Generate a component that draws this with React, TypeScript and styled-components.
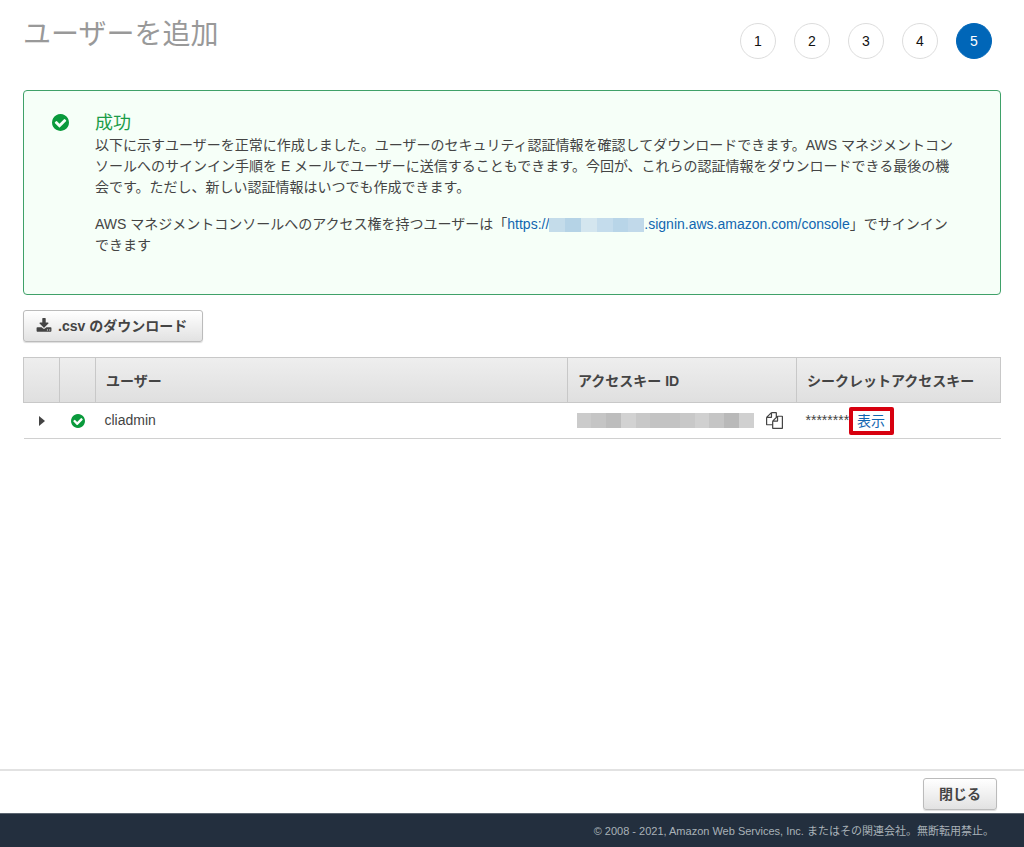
import React from "react";
import styled, { createGlobalStyle } from "styled-components";

const GlobalStyle = createGlobalStyle`
  *, *::before, *::after { box-sizing: border-box; }
  body {
    margin: 0;
    background: #fff;
    color: #444;
    font-family: "Liberation Sans", "Noto Sans CJK JP", sans-serif;
    font-size: 14px;
    line-height: 21px;
  }
  button { font-family: inherit; cursor: pointer; }
`;

const Page = styled.div`
  display: flex;
  flex-direction: column;
  min-height: 100vh;
`;

const Main = styled.main`
  flex: 1;
  padding: 12px 23px 0;
`;

const Header = styled.header`
  display: flex;
  justify-content: space-between;
  align-items: flex-start;
  height: 78px;
`;

const Title = styled.h1`
  margin: 0;
  font-size: 28px;
  font-weight: 400;
  line-height: 46px;
  color: #999;
`;

const Steps = styled.ol`
  display: flex;
  gap: 18px;
  margin: 0;
  padding: 11px 9px 0 0;
  list-style: none;
`;

const Step = styled.li<{ $current?: boolean }>`
  display: flex;
  align-items: center;
  justify-content: center;
  width: 36px;
  height: 36px;
  border: 1px solid ${(p) => (p.$current ? "#0066b8" : "#ddd")};
  border-radius: 50%;
  background: ${(p) => (p.$current ? "#0066b8" : "#fff")};
  color: ${(p) => (p.$current ? "#fff" : "#111")};
`;

const Notice = styled.section`
  display: flex;
  min-height: 205px;
  padding: 20px 42px 20px 28px;
  border: 1px solid #3fa169;
  border-radius: 4px;
  background: #f6fff8;
`;

const NoticeIcon = styled.div`
  flex: none;
  width: 43px;
  padding-top: 3px;
`;

const NoticeBody = styled.div`
  flex: 1;
  min-width: 0;
`;

const NoticeTitle = styled.h2`
  margin: 0;
  font-size: 18px;
  font-weight: 400;
  line-height: 24px;
  color: #1b9c48;
`;

const Paragraph = styled.p`
  margin: 0 0 16px;
`;

const Phrase = styled.span`
  white-space: nowrap;
`;

const Link = styled.a`
  color: #1166b0;
  text-decoration: none;
`;

const Mosaic = styled.span<{ $width: number; $height: number }>`
  display: inline-flex;
  width: ${(p) => p.$width}px;
  height: ${(p) => p.$height}px;
  vertical-align: middle;
`;

const MosaicCell = styled.span<{ $color: string }>`
  flex: 1;
  background: ${(p) => p.$color};
`;

const Button = styled.button<{ $withIcon?: boolean }>`
  display: inline-flex;
  align-items: center;
  justify-content: center;
  gap: 6px;
  height: 32px;
  padding: 0 15px 0 ${(p) => (p.$withIcon ? 12 : 15)}px;
  border: 1px solid #bbb;
  border-radius: 3px;
  background: linear-gradient(#fff, #e2e2e2);
  box-shadow: 0 1px 1px #ddd;
  color: #444;
  font-size: 14px;
  font-weight: 700;
  line-height: 20px;
`;

const Toolbar = styled.div`
  display: flex;
  padding: 15px 0;
`;

const Table = styled.table`
  width: 100%;
  border-collapse: collapse;
  table-layout: fixed;
`;

const Column = styled.col<{ $width?: number }>`
  ${(p) => (p.$width ? `width: ${p.$width}px;` : "")}
`;

const HeadRow = styled.tr`
  height: 45px;
  background: linear-gradient(#eee, #dfdfdf);
`;

const HeadCell = styled.th`
  padding: 2px 10px 0;
  border: 1px solid #c8c8c8;
  text-align: left;
  font-weight: 700;
`;

const Row = styled.tr`
  height: 36px;
  border-bottom: 1px solid #d0d0d0;
`;

const Cell = styled.td`
  padding: 0 9px;
`;

const CellContent = styled.div<{ $center?: boolean; $gap?: number }>`
  display: flex;
  align-items: center;
  justify-content: ${(p) => (p.$center ? "center" : "flex-start")};
  gap: ${(p) => p.$gap ?? 0}px;
  height: 28px;
`;

const IconButton = styled.button`
  display: flex;
  align-items: center;
  padding: 0;
  border: 0;
  background: none;
  color: #444;
`;

const ShowLink = styled.a`
  padding: 0 5px 0 4px;
  border: 4px solid #d7000f;
  border-radius: 2px;
  background: #fff;
  color: #1166b0;
  line-height: 20px;
  text-decoration: none;
`;

const Actions = styled.div`
  display: flex;
  justify-content: flex-end;
  padding: 7px 27px 3px;
  border-top: 2px solid #e2e2e2;
`;

const Footer = styled.footer`
  padding: 2px 30px 0;
  border-top: 1px solid #5b6570;
  background: #232f3e;
  color: #a9b2b8;
  font-size: 11px;
  line-height: 31px;
  text-align: right;
`;

const Svg = styled.svg`
  display: block;
  flex: none;
  fill: currentColor;
`;

const GreenSvg = styled(Svg)`
  color: #0a9a3c;
`;

const CheckIcon = ({ size }: { size: number }) => (
  <GreenSvg width={size} height={size} viewBox="128 128 1536 1536" aria-hidden="true">
    <path d="M1412 734q0-28-18-46l-91-90q-19-19-45-19t-45 19l-408 407-226-226q-19-19-45-19t-45 19l-91 90q-18 18-18 46 0 27 18 45l362 362q19 19 45 19 27 0 46-19l543-543q18-18 18-45zm252 162q0 209-103 385.5t-279.5 279.5-385.5 103-385.5-103-279.5-279.5-103-385.5 103-385.5 279.5-279.5 385.5-103 385.5 103 279.5 279.5 103 385.5z" />
  </GreenSvg>
);

const DownloadIcon = () => (
  <Svg width="16" height="16" viewBox="0 0 1792 1792" aria-hidden="true">
    <path d="M1344 1344q0-26-19-45t-45-19-45 19-19 45 19 45 45 19 45-19 19-45zm256 0q0-26-19-45t-45-19-45 19-19 45 19 45 45 19 45-19 19-45zm128-224v320q0 40-28 68t-68 28h-1472q-40 0-68-28t-28-68v-320q0-40 28-68t68-28h465l135 136q58 56 136 56t136-56l136-136h464q40 0 68 28t28 68zm-325-569q17 41-14 70l-448 448q-18 19-45 19t-45-19l-448-448q-31-29-14-70 17-39 59-39h256v-448q0-26 19-45t45-19h256q26 0 45 19t19 45v448h256q42 0 59 39z" />
  </Svg>
);

const CopyIcon = () => (
  <Svg width="17" height="17" viewBox="0 0 1792 1792" aria-hidden="true">
    <path d="M1696 384q40 0 68 28t28 68v1216q0 40-28 68t-68 28h-960q-40 0-68-28t-28-68v-288h-544q-40 0-68-28t-28-68v-672q0-40 20-88t48-76l408-408q28-28 76-48t88-20h416q40 0 68 28t28 68v328q68-40 128-40h416zm-544 213l-299 299h299v-299zm-640-384l-299 299h299v-299zm196 647l316-316v-416h-384v416q0 40-28 68t-68 28h-416v640h512v-256q0-40 20-88t48-76zm956 804v-1152h-384v416q0 40-28 68t-68 28h-416v640h896z" />
  </Svg>
);

const ExpandIcon = () => (
  <Svg width="6" height="10" viewBox="0 0 6 10" aria-hidden="true">
    <path d="M0 0L6 5L0 10Z" />
  </Svg>
);

const accountColors = ["#c4dcea", "#b5d3e6", "#d4e6ef", "#c4dcec", "#b8d5e8", "#c1d9ea"];
const keyColors = [
  "#cbcbcb", "#c5c5c5", "#bdbdbd", "#d2d2d2", "#c8c8c8", "#c3c3c3",
  "#c3c3c3", "#c8c8c8", "#d0d0d0", "#c5c5c5", "#b9b9b9", "#d0d0d0",
];

const Redacted = ({ colors, width, height }: { colors: string[]; width: number; height: number }) => (
  <Mosaic $width={width} $height={height}>
    {colors.map((color, i) => (
      <MosaicCell key={i} $color={color} />
    ))}
  </Mosaic>
);

export default function App() {
  return (
    <Page>
      <GlobalStyle />
      <Main>
        <Header>
          <Title>ユーザーを追加</Title>
          <Steps>
            {[1, 2, 3, 4, 5].map((n) => (
              <Step key={n} $current={n === 5} aria-current={n === 5 ? "step" : undefined}>
                {n}
              </Step>
            ))}
          </Steps>
        </Header>

        <Notice>
          <NoticeIcon>
            <CheckIcon size={17} />
          </NoticeIcon>
          <NoticeBody>
            <NoticeTitle>成功</NoticeTitle>
            <Paragraph>
              以下に示すユーザーを正常に作成しました。ユーザーのセキュリティ認証情報を確認してダウンロードできます。AWS マネジメントコンソールへのサインイン手順を E メールでユーザーに送信することもできます。今回が、これらの認証情報をダウンロードできる最後の機会です。ただし、新しい認証情報はいつでも作成できます。
            </Paragraph>
            <Paragraph>
              AWS マネジメントコンソールへのアクセス権を持つユーザーは「
              <Link href="#console">
                https://
                <Redacted colors={accountColors} width={95} height={14} />
                .signin.aws.amazon.com/console
              </Link>
              」でサインイン<wbr />
              <Phrase>できます</Phrase>
            </Paragraph>
          </NoticeBody>
        </Notice>

        <Toolbar>
          <Button type="button" $withIcon>
            <DownloadIcon />
            .csv のダウンロード
          </Button>
        </Toolbar>

        <Table>
          <colgroup>
            <Column $width={36} />
            <Column $width={36} />
            <Column />
            <Column $width={229} />
            <Column $width={204} />
          </colgroup>
          <thead>
            <HeadRow>
              <HeadCell />
              <HeadCell />
              <HeadCell scope="col">ユーザー</HeadCell>
              <HeadCell scope="col">アクセスキー ID</HeadCell>
              <HeadCell scope="col">シークレットアクセスキー</HeadCell>
            </HeadRow>
          </thead>
          <tbody>
            <Row>
              <Cell>
                <CellContent $center>
                  <IconButton type="button" aria-label="展開">
                    <ExpandIcon />
                  </IconButton>
                </CellContent>
              </Cell>
              <Cell>
                <CellContent $center>
                  <CheckIcon size={14} />
                </CellContent>
              </Cell>
              <Cell>
                <CellContent>cliadmin</CellContent>
              </Cell>
              <Cell>
                <CellContent $gap={12}>
                  <Redacted colors={keyColors} width={177} height={15} />
                  <IconButton type="button" aria-label="コピー">
                    <CopyIcon />
                  </IconButton>
                </CellContent>
              </Cell>
              <Cell>
                <CellContent>
                  <span>********</span>
                  <ShowLink href="#show">表示</ShowLink>
                </CellContent>
              </Cell>
            </Row>
          </tbody>
        </Table>
      </Main>
      <Actions>
        <Button type="button">閉じる</Button>
      </Actions>
      <Footer>© 2008 - 2021, Amazon Web Services, Inc. またはその関連会社。無断転用禁止。</Footer>
    </Page>
  );
}
